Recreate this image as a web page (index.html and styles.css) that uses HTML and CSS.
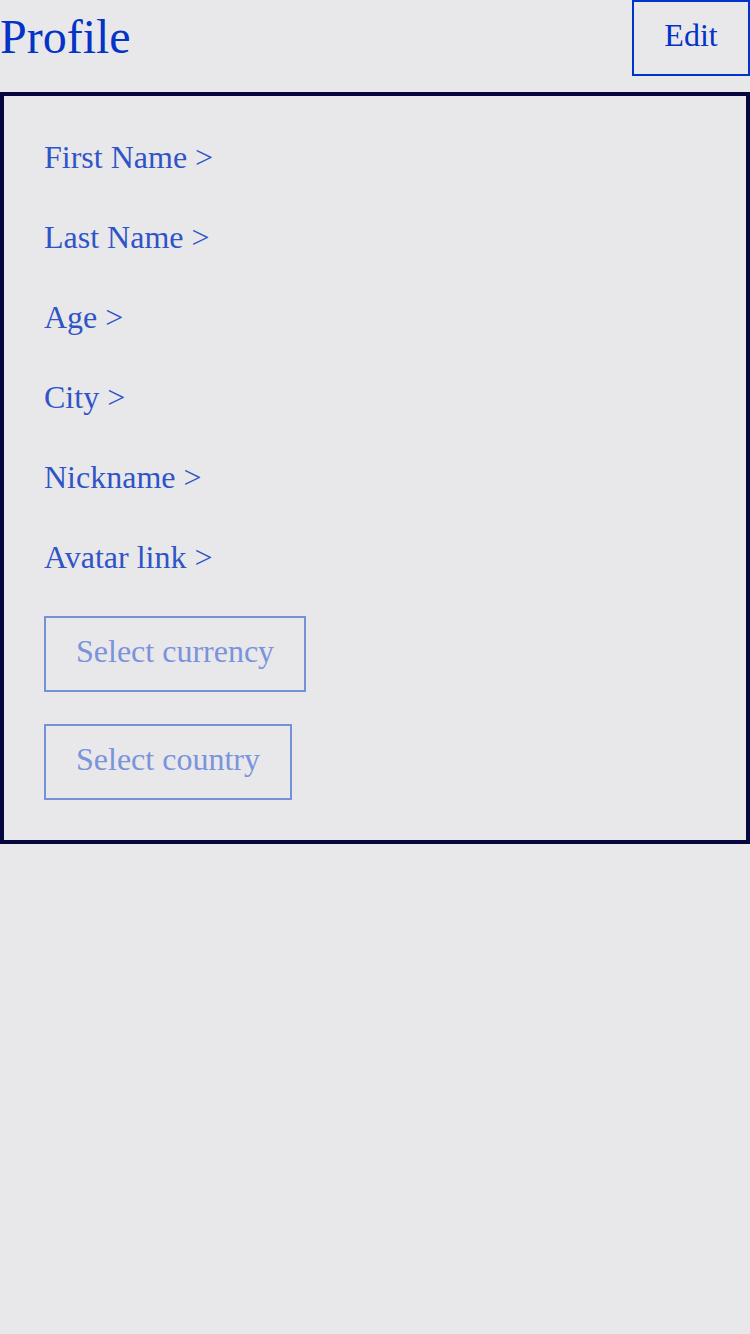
FILE: index.html
```html
<!DOCTYPE html>
<html>
<head>
<meta charset="utf-8">
<link rel="stylesheet" href="styles.css">
</head>
<body>
<div class="header">
  <h1 class="title">Profile</h1>
  <button class="edit">Edit</button>
</div>
<div class="card">
  <div class="rows">
    <div class="row">First Name &gt;</div>
    <div class="row">Last Name &gt;</div>
    <div class="row">Age &gt;</div>
    <div class="row">City &gt;</div>
    <div class="row">Nickname &gt;</div>
    <div class="row">Avatar link &gt;</div>
  </div>
  <div class="selects">
    <div class="select">Select currency</div>
    <div class="select">Select country</div>
  </div>
</div>
</body>
</html>
```

FILE: styles.css
```css
html, body {
  margin: 0;
  padding: 0;
  background: #e8e8ea;
  font-family: "Liberation Serif", "Times New Roman", serif;
}
.header {
  display: flex;
  justify-content: space-between;
  align-items: flex-start;
  height: 76px;
  margin-bottom: 16px;
}
.title {
  margin: 0;
  padding-top: 9px;
  font-size: 48px;
  font-weight: normal;
  color: #0433c8;
  line-height: 55px;
}
.edit {
  box-sizing: border-box;
  width: 118px;
  height: 76px;
  padding: 15px 0 20px;
  text-align: center;
  border: 2px solid #0033cc;
  background: transparent;
  color: #0433c8;
  font-family: "Liberation Serif", "Times New Roman", serif;
  font-size: 32px;
  line-height: 37px;
}
.card {
  border: 4px solid #06063f;
  padding: 41px 40px 40px;
  display: flex;
  flex-direction: column;
  gap: 39px;
}
.rows {
  display: flex;
  flex-direction: column;
  gap: 40px;
}
.row {
  font-size: 32px;
  line-height: 40px;
  color: #2f54c8;
}
.selects {
  display: flex;
  flex-direction: column;
  align-items: flex-start;
  gap: 32px;
}
.select {
  box-sizing: border-box;
  height: 76px;
  padding: 15px 30px 20px;
  border: 2px solid #7491dc;
  color: #7a93dc;
  font-size: 32px;
  line-height: 37px;
}
```
